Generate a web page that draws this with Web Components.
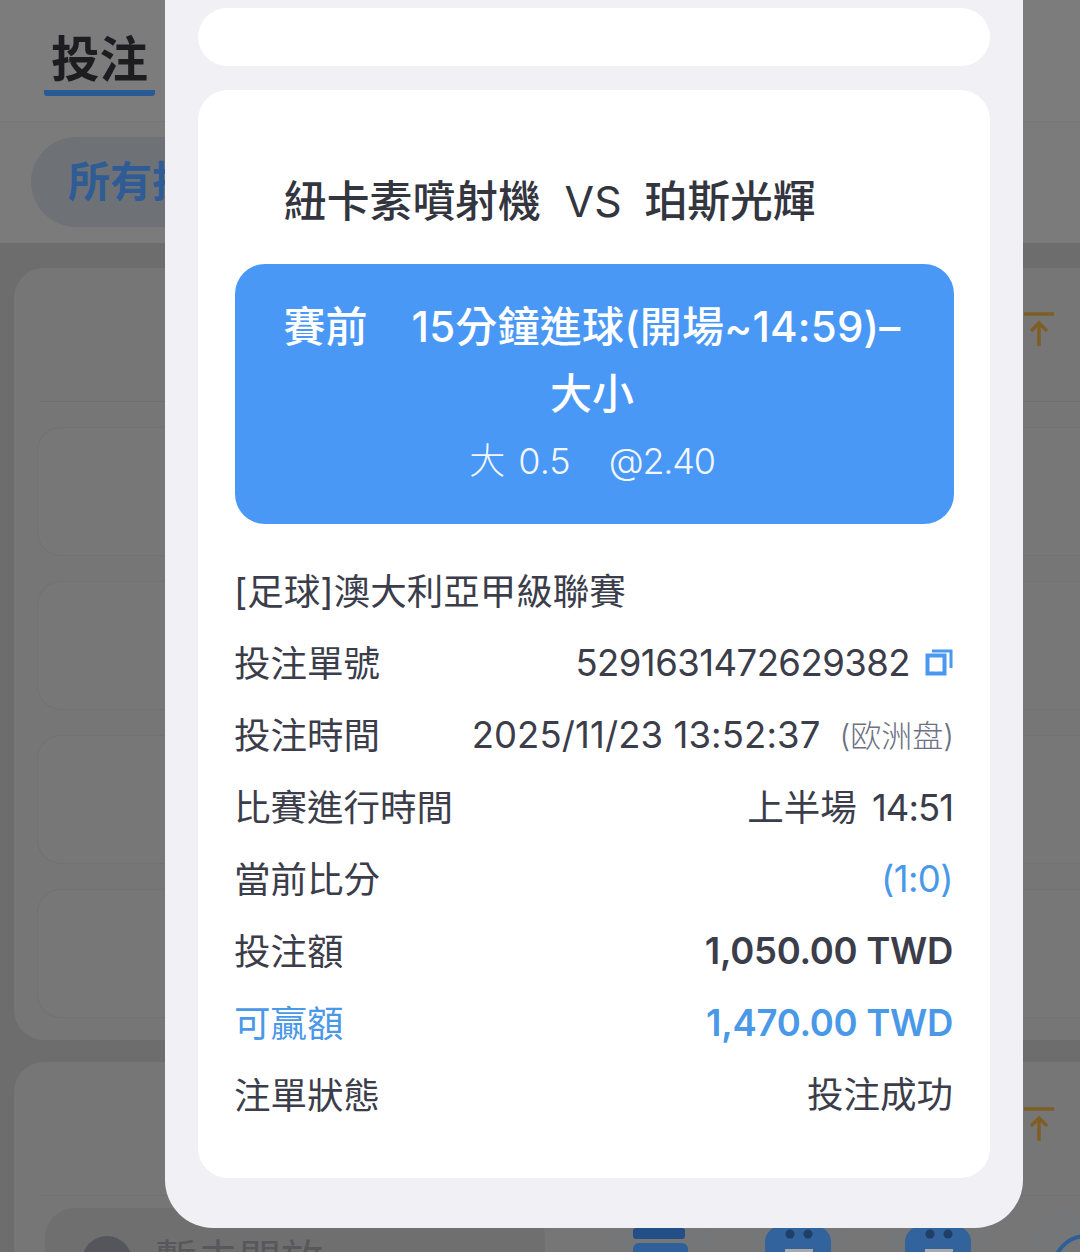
<!DOCTYPE html>
<html>
<head>
<meta charset="utf-8">
<style>
    html, body { margin: 0; height: 1252px; overflow: hidden; }
    body { font-family: Inter, "Noto Sans CJK TC", sans-serif; background: #6e6e6e; position: relative; }
</style>
</head>
<body>
<bet-list-page></bet-list-page>
<bet-modal>
    <bet-hero></bet-hero>
    <bet-row><span slot="label">[足球]澳大利亞甲級聯賽</span></bet-row>
    <bet-row>
        <span slot="label">投注單號</span>
        <span style="letter-spacing:-0.55px">5291631472629382</span>
        <svg slot="extra" width="28" height="28" viewBox="0 0 28 28" fill="none" stroke="#4a98f0" stroke-width="4" style="margin:0 0 3px 15px"><rect x="2.5" y="7.5" width="17" height="18"/><path d="M7 3h19v17" stroke-width="3"/></svg>
    </bet-row>
    <bet-row>
        <span slot="label">投注時間</span>
        <span style="letter-spacing:0.1px">2025/11/23 13:52:37</span>
        <span slot="extra" style="font-size:31px;font-weight:300;color:#6d7184;margin:0 -1px 4px 19px">(欧洲盘)</span>
    </bet-row>
    <bet-row><span slot="label">比賽進行時間</span><span style="margin-bottom:4px;word-spacing:5px">上半場 <span style="letter-spacing:-1px">14:51</span></span></bet-row>
    <bet-row><span slot="label">當前比分</span><span style="color:#4a98e8;letter-spacing:-0.6px">(1:0)</span></bet-row>
    <bet-row><span slot="label">投注額</span><b style="font-weight:600;letter-spacing:-0.3px">1,050.00 TWD</b></bet-row>
    <bet-row style="color:#4a98e8"><span slot="label">可贏額</span><b style="font-weight:600;letter-spacing:-0.3px">1,470.00 TWD</b></bet-row>
    <bet-row><span slot="label">注單狀態</span><span style="margin-bottom:6px">投注成功</span></bet-row>
</bet-modal>

<script>
const pinIcon = `<svg class="pin" width="30" height="36" viewBox="0 0 30 36" fill="none" stroke="#7f5e24" stroke-width="3.4"><path d="M0 2h30"/><path d="M15 34V12"/><path d="M7 19l8-8 8 8"/></svg>`
const faceIcon = `<svg width="108" height="44"><rect x="21" y="18" width="66" height="50" rx="16" fill="#33639c"/><circle cx="46" cy="26" r="4.5" fill="#1f3f66"/><circle cx="64" cy="26" r="4.5" fill="#1f3f66"/><rect x="41" y="41" width="28" height="10" fill="#a9a9ac"/></svg>`

const pageTemplate = document.createElement("template")
pageTemplate.innerHTML = `
    <style>
        :host {
            display: block;
            height: 1252px;
            overflow: hidden;
            background: #6d6d6e;
            font-family: "Noto Sans CJK TC", sans-serif;
        }
        .tabs {
            height: 122px;
            box-sizing: border-box;
            background: #7c7c7c;
            border-bottom: 1px solid #767676;
            padding: 26px 0 0 44px;
        }
        .tab {
            display: inline-block;
            font-size: 48.5px;
            line-height: 60px;
            font-weight: 700;
            color: #1d1d20;
            padding: 0 7px 4px;
            border-bottom: 6px solid #2a5a96;
            border-radius: 0 0 3px 3px;
        }
        .filters {
            height: 121px;
            box-sizing: border-box;
            background: #7b7b7b;
            padding: 15px 0 0 31px;
        }
        .chip {
            display: inline-block;
            width: 300px;
            height: 90px;
            line-height: 84px;
            border-radius: 45px;
            padding-left: 37px;
            box-sizing: border-box;
            background: #6e7277;
            color: #2f5c95;
            font-size: 42px;
            font-weight: 700;
            white-space: nowrap;
            overflow: hidden;
        }
        .list {
            padding: 25px 0 0 14px;
        }
        .card {
            height: 772px;
            box-sizing: border-box;
            background: #767676;
            border-radius: 30px 0 0 30px;
            padding: 159px 0 0 23px;
            display: flex;
            flex-direction: column;
            gap: 25px;
            margin-bottom: 22px;
            position: relative;
        }
        .card::before {
            content: "";
            position: absolute;
            left: 26px;
            right: 0;
            top: 133px;
            height: 1px;
            background: #6f6f6f;
        }
        .card.second { height: 300px; }
        .inner {
            height: 127px;
            border-radius: 24px 0 0 24px;
            background: #777777;
            border: 1px solid #727272;
            border-right: 0;
        }
        .pin {
            position: absolute;
            right: 26px;
            top: 44px;
        }
        .second .pin { top: 45px; }
        .dock {
            position: absolute;
            left: 0;
            right: 0;
            top: 1208px;
            height: 44px;
        }
        .dock .search {
            position: absolute;
            left: 45px;
            top: 0;
            width: 500px;
            height: 90px;
            background: #6f6f6f;
            border-radius: 30px;
            color: #58585c;
            font-size: 42px;
            line-height: 58px;
        }
        .dock .search i {
            position: absolute;
            left: 37px;
            top: 28px;
            width: 50px;
            height: 50px;
            border-radius: 50%;
            background: #55555c;
        }
        .dock .search span {
            position: absolute;
            left: 110px;
            top: 20px;
            white-space: nowrap;
        }
        .round {
            position: absolute;
            top: 0;
            width: 108px;
            height: 108px;
            border-radius: 50%;
            background: #747678;
            overflow: hidden;
        }
        .round svg { display: block; }
    </style>
    <div class="tabs"><span class="tab">投注</span></div>
    <div class="filters"><span class="chip">所有投注</span></div>
    <div class="list">
        <div class="card">
            ${pinIcon}
            <div class="inner"></div>
            <div class="inner"></div>
            <div class="inner"></div>
            <div class="inner"></div>
        </div>
        <div class="card second">
            ${pinIcon}
        </div>
    </div>
    <div class="dock">
        <div class="search"><i></i><span>暫未開放</span></div>
        <div class="round" style="left:606px">
            <svg width="108" height="44"><rect x="27" y="20" width="52" height="11" rx="3" fill="#234f86"/><rect x="27" y="35" width="55" height="14" rx="6" fill="#2f6099"/></svg>
        </div>
        <div class="round" style="left:744px">${faceIcon}</div>
        <div class="round" style="left:884px">${faceIcon}</div>
        <div class="round" style="left:1028px">
            <svg width="52" height="44" fill="none" stroke="#2e5f99" stroke-width="4"><circle cx="58" cy="60" r="32"/></svg>
        </div>
    </div>
`

class BetListPage extends HTMLElement {
    constructor() {
        super();
        this.attachShadow({ mode: "open" });
        this.shadowRoot.appendChild(pageTemplate.content.cloneNode(true));
    }
}

const modalTemplate = document.createElement("template")
modalTemplate.innerHTML = `
    <style>
        :host {
            position: absolute;
            left: 165px;
            top: -40px;
            width: 858px;
            height: 1268px;
            box-sizing: border-box;
            padding: 48px 33px 50px;
            background: #f0f0f5;
            border-radius: 0 0 48px 48px;
            display: flex;
            flex-direction: column;
            gap: 24px;
        }
        .pill {
            height: 58px;
            border-radius: 29px;
            background: white;
        }
        .ticket {
            flex: 1;
            background: white;
            border-radius: 30px;
            padding: 84px 37px 0;
            color: #3b3d4a;
        }
        .title {
            margin-left: 49px;
            font-size: 42.8px;
            line-height: 56px;
            font-weight: 500;
            color: #33353f;
            white-space: pre;
            margin-bottom: 34px;
        }
        .title span { margin-left: 1px; font-weight: 400; }
    </style>
    <div class="pill"></div>
    <div class="ticket">
        <div class="title">紐卡素噴射機  <span>VS</span>  珀斯光輝</div>
        <slot></slot>
    </div>
`

class BetModal extends HTMLElement {
    constructor() {
        super();
        this.attachShadow({ mode: "open" });
        this.shadowRoot.appendChild(modalTemplate.content.cloneNode(true));
    }
}

const heroTemplate = document.createElement("template")
heroTemplate.innerHTML = `
    <style>
        :host {
            display: block;
            height: 260px;
            box-sizing: border-box;
            background: #4a98f5;
            border-radius: 30px;
            padding: 29px 33px 0 28px;
            margin-right: -1px;
            color: white;
            text-align: center;
            margin-bottom: 31px;
        }
        .market {
            font-size: 42px;
            line-height: 67px;
            font-weight: 500;
            white-space: nowrap;
        }
        .market span { margin-right: 44px; }
        .market em { font-style: normal; letter-spacing: 0.2px; }
        .odds {
            font-size: 36px;
            line-height: 69px;
            font-weight: 300;
            white-space: nowrap;
            color: #f2f7ff;
        }
        .odds span { margin-right: 38px; word-spacing: 3px; }
        .odds em { font-style: normal; letter-spacing: -1.2px; }
    </style>
    <div class="market"><span>賽前</span><em>15分鐘進球(開場~14:59)–</em><br>大小</div>
    <div class="odds"><span>大 0.5</span><em>@2.40</em></div>
`

class BetHero extends HTMLElement {
    constructor() {
        super();
        this.attachShadow({ mode: "open" });
        this.shadowRoot.appendChild(heroTemplate.content.cloneNode(true));
    }
}

const rowTemplate = document.createElement("template")
rowTemplate.innerHTML = `
    <style>
        :host {
            display: flex;
            align-items: center;
            height: 72px;
            font-size: 36.5px;
            white-space: nowrap;
        }
        .label { margin: 0 auto 4px -1px; }
        .extra { display: flex; align-items: center; }
    </style>
    <span class="label"><slot name="label"></slot></span>
    <slot></slot>
    <span class="extra"><slot name="extra"></slot></span>
`

class BetRow extends HTMLElement {
    constructor() {
        super();
        this.attachShadow({ mode: "open" });
        this.shadowRoot.appendChild(rowTemplate.content.cloneNode(true));
    }
}

customElements.define("bet-list-page", BetListPage)
customElements.define("bet-modal", BetModal)
customElements.define("bet-hero", BetHero)
customElements.define("bet-row", BetRow)
</script>
</body>
</html>
